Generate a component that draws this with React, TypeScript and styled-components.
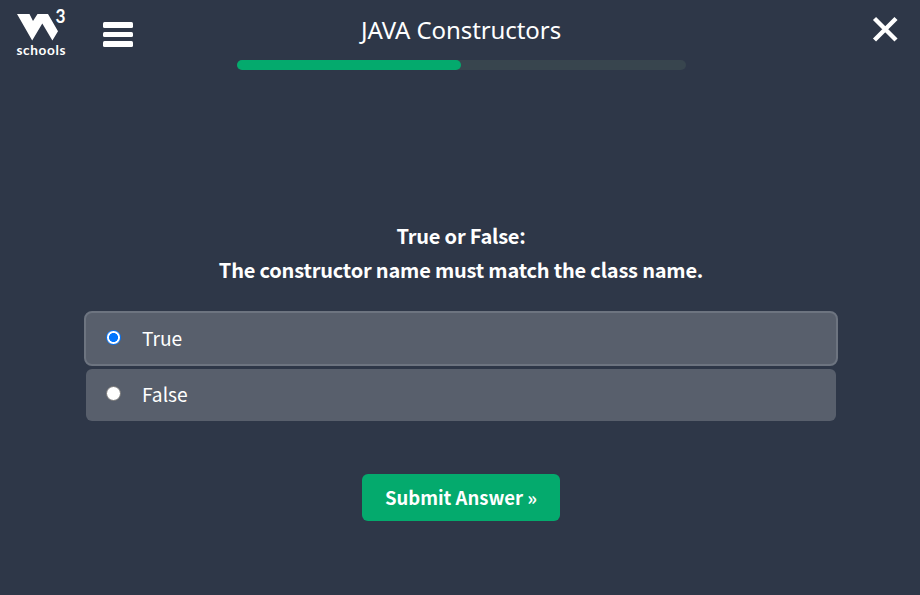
import React, { useState } from "react";
import styled, { createGlobalStyle } from "styled-components";

const sourceSans = `"Source Sans Pro", "Noto Sans CJK SC", sans-serif`;

const GlobalStyle = createGlobalStyle`
  * { box-sizing: border-box; }
  body { margin: 0; background: #2e3748; color: #fff; }
`;

const Page = styled.div`
  width: 920px;
  height: 595px;
  display: flex;
  flex-direction: column;
  align-items: center;
  overflow: hidden;
  background: #2e3748;
  font-family: ${sourceSans};
`;

const Header = styled.header`
  width: 100%;
  height: 60px;
  display: grid;
  grid-template-columns: 237px 448px 235px;
  align-items: start;
`;

const HeaderLeft = styled.div`
  display: flex;
`;

const Logo = styled.svg`
  display: block;
  width: 80px;
  height: 60px;
  font-family: Lato, sans-serif;
  font-weight: 700;
`;

const MenuButton = styled.button`
  display: flex;
  flex-direction: column;
  gap: 4px;
  margin: 22px 0 0 22.5px;
  padding: 0;
  border: 0;
  background: none;
`;

const MenuBar = styled.span`
  width: 30px;
  height: 5.5px;
  border-radius: 1.5px;
  background: #fff;
`;

const Title = styled.h1`
  margin: 12px 0 0;
  text-align: center;
  white-space: nowrap;
  font: 400 24px/36px "Noto Sans", sans-serif;
  letter-spacing: -0.08px;
`;

const CloseButton = styled.button`
  justify-self: end;
  margin: 16px 21px 0 0;
  padding: 0;
  border: 0;
  background: none;
  line-height: 0;
`;

const Track = styled.div`
  width: 449px;
  height: 10px;
  margin-left: 3px;
  border-radius: 5px;
  background: #38454e;
`;

const Progress = styled.div`
  height: 100%;
  width: 224px;
  border-radius: 5px;
  background: #04aa6d;
`;

const Question = styled.h2`
  margin: 149px 0 0 2px;
  text-align: center;
  font-size: 20px;
  font-weight: 700;
  line-height: 34px;
  letter-spacing: -0.2px;
`;

const Options = styled.div`
  display: flex;
  flex-direction: column;
  align-items: center;
  gap: 3px;
  width: 754px;
  margin: 24px 0 0 2px;
`;

const Option = styled.label<{ $selected: boolean }>`
  display: flex;
  align-items: center;
  width: ${(p) => (p.$selected ? 754 : 750)}px;
  height: ${(p) => (p.$selected ? 55 : 52)}px;
  padding: 0 0 ${(p) => (p.$selected ? 1 : 2)}px 20px;
  border: ${(p) => (p.$selected ? "2px solid #6d7480" : "0")};
  border-radius: ${(p) => (p.$selected ? 8 : 6)}px;
  background: #585f6c;
  font-size: 19.2px;
  line-height: 30px;
`;

const Radio = styled.input<{ $selected: boolean }>`
  appearance: none;
  width: 15px;
  height: 15px;
  margin: 0 21px 1px 0;
  border-radius: 50%;
  border: ${(p) => (p.$selected ? "1.5px solid #0075ff" : "1px solid #767676")};
  background: ${(p) =>
    p.$selected ? "radial-gradient(circle, #0075ff 0 4.2px, #fff 4.8px)" : "#fff"};
`;

const Submit = styled.button`
  width: 198px;
  height: 47px;
  margin: 53px 0 0 2px;
  padding: 0 0 2px;
  border: 0;
  border-radius: 6px;
  background: #04aa6d;
  color: #fff;
  font: 700 18.5px/30px ${sourceSans};
  white-space: nowrap;
`;

const answers = ["True", "False"];

export default function App() {
  const [choice, setChoice] = useState("True");
  return (
    <>
      <GlobalStyle />
      <Page>
        <Header>
          <HeaderLeft>
            <Logo viewBox="0 0 80 60" fill="#fff" aria-label="W3Schools">
              <path d="M17 14H29.5L33 21L37.5 14H48L58 31.3L52.4 40.6L42.3 23.6L32.2 40.6Z" />
              <text x="55.5" y="22.9" fontSize="18" textLength="10" lengthAdjust="spacingAndGlyphs">3</text>
              <text x="16.5" y="54.7" fontSize="13.6" textLength="49" lengthAdjust="spacing">schools</text>
            </Logo>
            <MenuButton aria-label="Menu">
              <MenuBar />
              <MenuBar />
              <MenuBar />
            </MenuButton>
          </HeaderLeft>
          <Title>JAVA Constructors</Title>
          <CloseButton aria-label="Close">
            <svg width="27" height="27" viewBox="0 0 27 27" stroke="#fff" strokeWidth="4.4">
              <path d="M2.5 2.5L24 24M24 2.5L2.5 24" />
            </svg>
          </CloseButton>
        </Header>
        <Track>
          <Progress />
        </Track>
        <Question>
          True or False:
          <br />
          The constructor name must match the class name.
        </Question>
        <Options>
          {answers.map((a) => (
            <Option key={a} $selected={choice === a}>
              <Radio
                type="radio"
                name="answer"
                $selected={choice === a}
                checked={choice === a}
                onChange={() => setChoice(a)}
              />
              {a}
            </Option>
          ))}
        </Options>
        <Submit>Submit Answer »</Submit>
      </Page>
    </>
  );
}
